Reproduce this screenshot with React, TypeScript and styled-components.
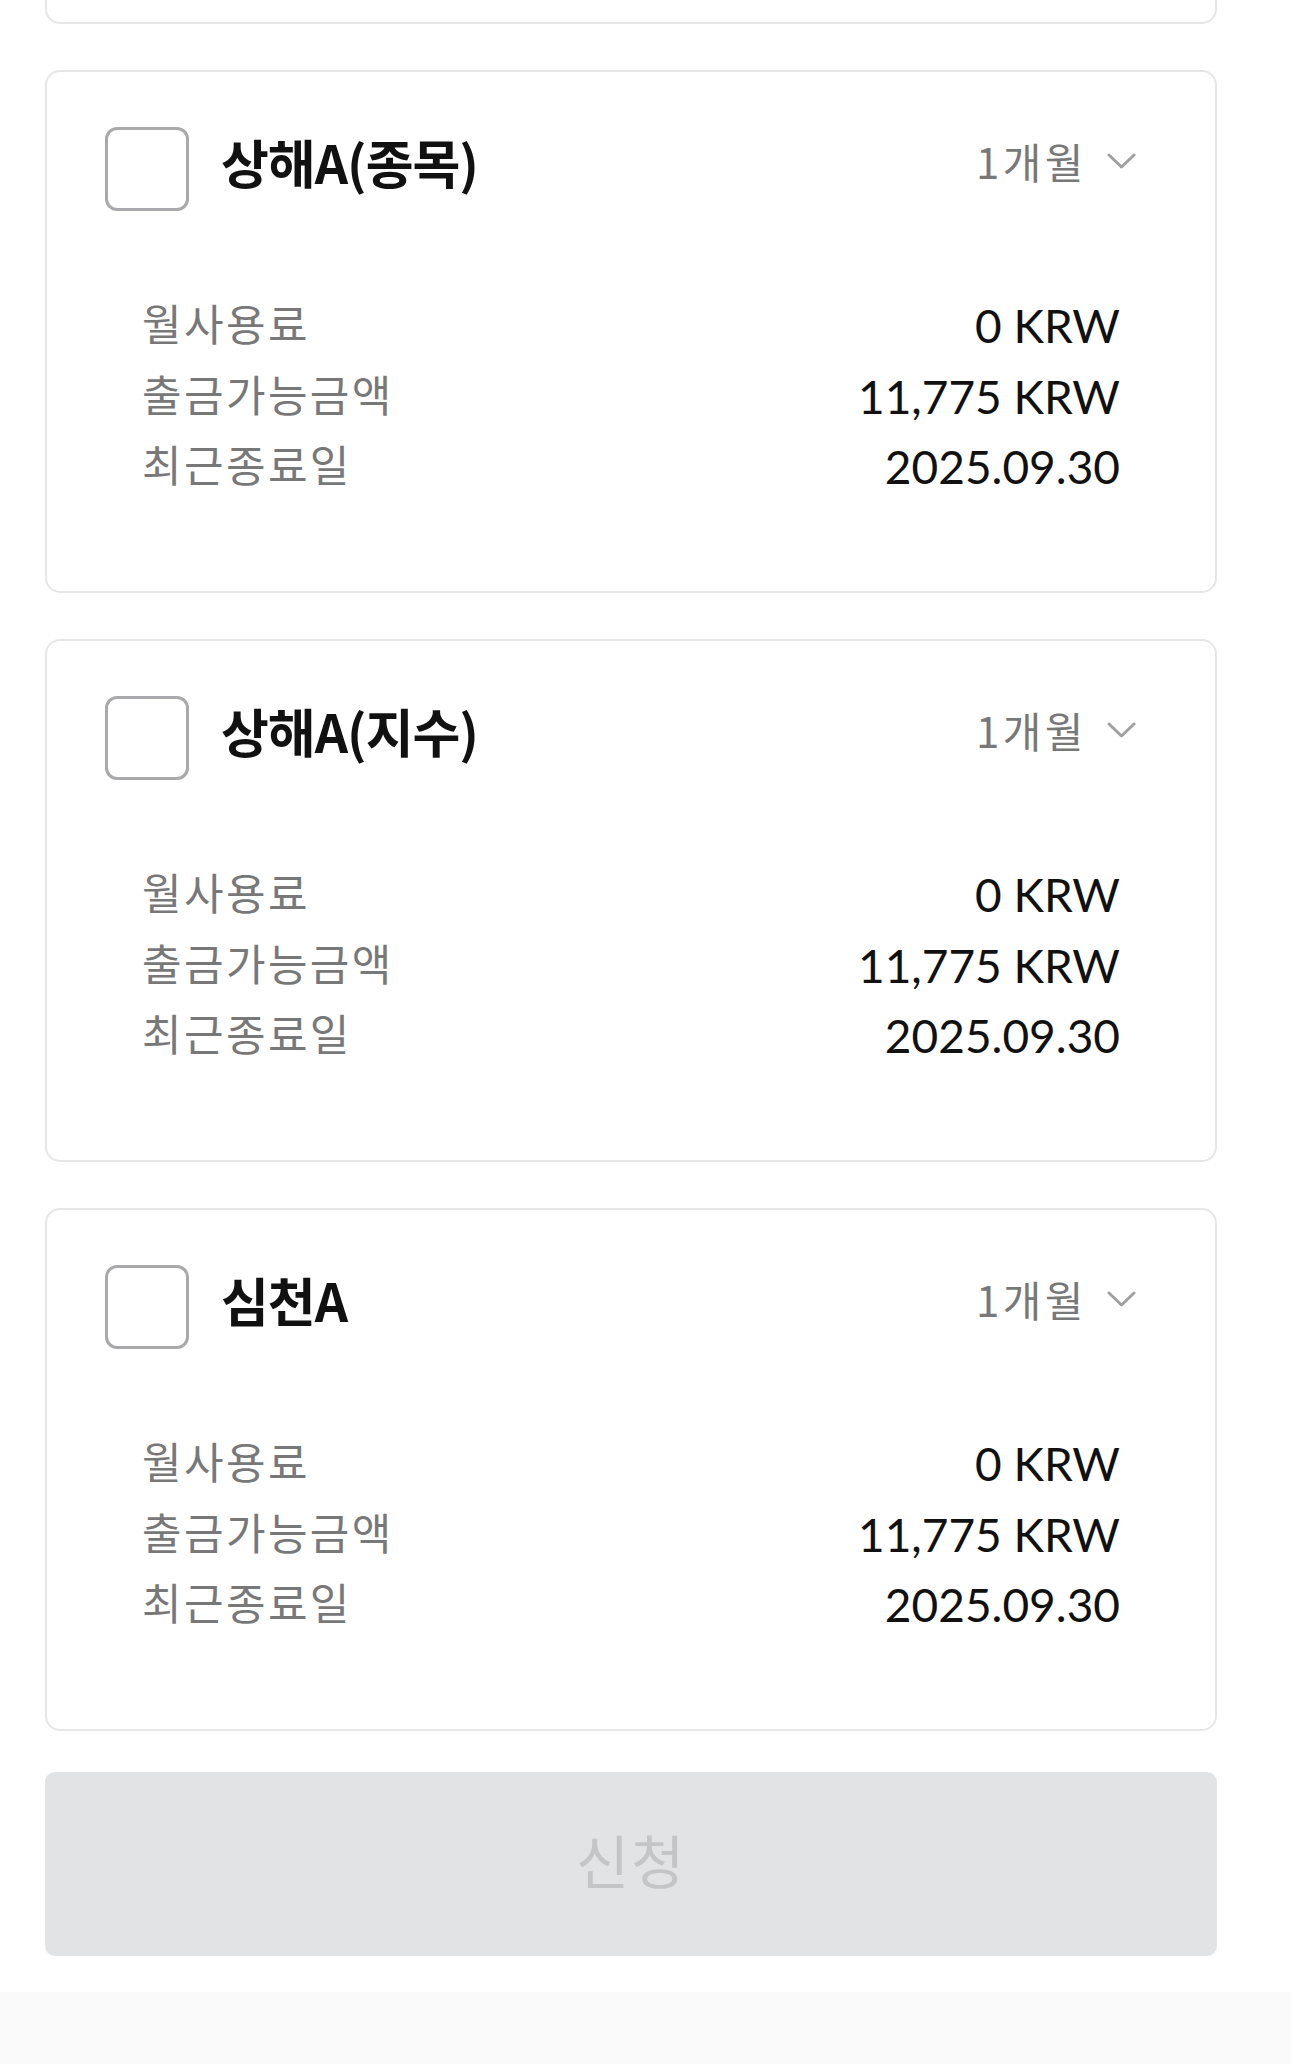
import React from 'react';
import styled, { createGlobalStyle } from 'styled-components';

const GlobalStyle = createGlobalStyle`
  * {
    box-sizing: border-box;
  }

  body {
    margin: 0;
    background: #ffffff;
    font-family: 'Noto Sans CJK KR', 'Noto Sans', sans-serif;
    -webkit-font-smoothing: antialiased;
  }
`;

const Page = styled.div`
  display: flex;
  flex-direction: column;
  min-height: 2064px;
  background: #ffffff;
`;

const Content = styled.main`
  display: flex;
  flex-direction: column;
  padding: 0 74px 0 45px;
`;

const CardList = styled.ul`
  display: flex;
  flex-direction: column;
  gap: 46px;
  margin: 0;
  padding: 0;
  list-style: none;
`;

// bottom of the card scrolled above the top of the view
const CardTail = styled.li`
  height: 24px;
  border: 2px solid #e6e6e6;
  border-top: none;
  border-radius: 0 0 15px 15px;
`;

const Card = styled.li`
  display: flex;
  flex-direction: column;
  height: 523px;
  padding: 55px 79px 88px 58px;
  border: 2px solid #e6e6e6;
  border-radius: 15px;
  background: #ffffff;
`;

const Header = styled.div`
  display: flex;
  align-items: center;
  height: 84px;
`;

const Checkbox = styled.button<{ checked?: boolean }>`
  flex: none;
  width: 84px;
  height: 84px;
  padding: 0;
  border: 3px solid ${props => (props.checked ? '#2f6bff' : '#a9a9ab')};
  border-radius: 12px;
  background: ${props => (props.checked ? '#2f6bff' : '#ffffff')};
  cursor: pointer;
`;

const Title = styled.h3`
  margin: 0 0 0 32px;
  padding-bottom: 14px;
  font-size: 52px;
  font-weight: 700;
  letter-spacing: -1px;
  line-height: 1;
  color: #111111;
`;

const PeriodSelect = styled.button`
  display: flex;
  align-items: center;
  gap: 20px;
  margin-left: auto;
  padding: 0 0 16px;
  border: none;
  background: none;
  font-family: 'Noto Sans CJK KR', sans-serif;
  font-size: 42px;
  letter-spacing: 3.5px;
  line-height: 1;
  color: #787878;
  cursor: pointer;
`;

const InfoList = styled.dl`
  display: flex;
  flex-direction: column;
  margin: 80px 0 0;
  padding: 0 16px 0 37px;
`;

const InfoRow = styled.div`
  display: flex;
  align-items: center;
  justify-content: space-between;
  height: 70.5px;
`;

const InfoLabel = styled.dt`
  padding-bottom: 7px;
  font-size: 43px;
  letter-spacing: 2.4px;
  line-height: 1;
  color: #787878;
`;

const InfoValue = styled.dd`
  margin: 0;
  font-family: Lato, 'Noto Sans CJK KR', sans-serif;
  font-size: 46px;
  line-height: 1;
  color: #111111;
`;

const SubmitButton = styled.button`
  width: 100%;
  height: 184px;
  margin-top: 41px;
  padding: 0 0 10px;
  border: none;
  border-radius: 10px;
  background: #e2e3e5;
  font-family: 'Noto Sans CJK KR', sans-serif;
  font-size: 58px;
  letter-spacing: 2px;
  color: #c4c5c7;
  cursor: not-allowed;
`;

const Footer = styled.footer`
  height: 72px;
  margin-top: 36px;
  background: #fafafa;
`;

const Chevron = () => (
  <svg width="29" height="16" viewBox="0 0 29 16" fill="none">
    <path d="M2 2L14.5 14L27 2" stroke="#a0a0a2" strokeWidth="3" strokeLinecap="round" strokeLinejoin="round" />
  </svg>
);

interface Product {
  id: string;
  name: string;
  period: string;
  monthlyFee: string;
  withdrawable: string;
  lastEndDate: string;
}

const products: Product[] = [
  { id: 'sh-stock', name: '상해A(종목)', period: '1개월', monthlyFee: '0 KRW', withdrawable: '11,775 KRW', lastEndDate: '2025.09.30' },
  { id: 'sh-index', name: '상해A(지수)', period: '1개월', monthlyFee: '0 KRW', withdrawable: '11,775 KRW', lastEndDate: '2025.09.30' },
  { id: 'sz', name: '심천A', period: '1개월', monthlyFee: '0 KRW', withdrawable: '11,775 KRW', lastEndDate: '2025.09.30' },
];

const ProductCard: React.FC<{ product: Product }> = ({ product }) => (
  <Card>
    <Header>
      <Checkbox aria-label={product.name} />
      <Title>{product.name}</Title>
      <PeriodSelect>
        <span>{product.period}</span>
        <Chevron />
      </PeriodSelect>
    </Header>
    <InfoList>
      <InfoRow>
        <InfoLabel>월사용료</InfoLabel>
        <InfoValue>{product.monthlyFee}</InfoValue>
      </InfoRow>
      <InfoRow>
        <InfoLabel>출금가능금액</InfoLabel>
        <InfoValue>{product.withdrawable}</InfoValue>
      </InfoRow>
      <InfoRow>
        <InfoLabel>최근종료일</InfoLabel>
        <InfoValue>{product.lastEndDate}</InfoValue>
      </InfoRow>
    </InfoList>
  </Card>
);

const App: React.FC = () => (
  <Page>
    <GlobalStyle />
    <Content>
      <CardList>
        <CardTail />
        {products.map(p => (
          <ProductCard key={p.id} product={p} />
        ))}
      </CardList>
      <SubmitButton disabled>신청</SubmitButton>
    </Content>
    <Footer />
  </Page>
);

export default App;
